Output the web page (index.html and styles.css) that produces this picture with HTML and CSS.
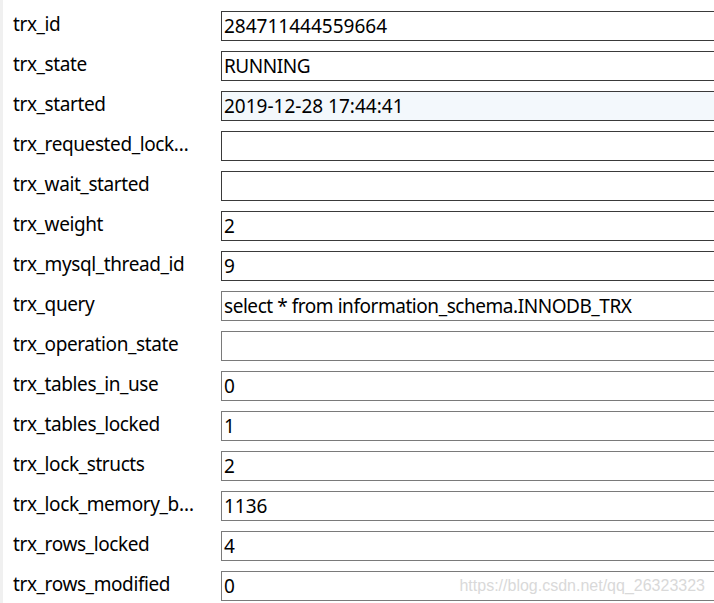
FILE: index.html
```html
<!DOCTYPE html>
<html lang="en">
<head>
  <meta charset="UTF-8">
  <title>INNODB_TRX</title>
  <link rel="stylesheet" href="styles.css">
</head>
<body>
  <div class="form">
    <div class="row"><label>trx_id</label><div class="field">284711444559664</div></div>
    <div class="row"><label>trx_state</label><div class="field text">RUNNING</div></div>
    <div class="row"><label>trx_started</label><div class="field active">2019-12-28 17:44:41</div></div>
    <div class="row"><label>trx_requested_lock…</label><div class="field"></div></div>
    <div class="row"><label>trx_wait_started</label><div class="field"></div></div>
    <div class="row"><label>trx_weight</label><div class="field">2</div></div>
    <div class="row"><label>trx_mysql_thread_id</label><div class="field">9</div></div>
    <div class="row light"><label>trx_query</label><div class="field text">select * from information_schema.INNODB_TRX</div></div>
    <div class="row light"><label>trx_operation_state</label><div class="field"></div></div>
    <div class="row light"><label>trx_tables_in_use</label><div class="field">0</div></div>
    <div class="row light"><label>trx_tables_locked</label><div class="field">1</div></div>
    <div class="row light"><label>trx_lock_structs</label><div class="field">2</div></div>
    <div class="row light"><label>trx_lock_memory_b…</label><div class="field">1136</div></div>
    <div class="row light"><label>trx_rows_locked</label><div class="field">4</div></div>
    <div class="row light"><label>trx_rows_modified</label><div class="field">0</div></div>
  </div>

  <div class="watermark">https://blog.csdn.net/qq_26323323</div>
</body>
</html>
```

FILE: styles.css
```css
*{
  margin:0;
  padding:0;
  box-sizing: border-box;
}
body {
  background: #fff;
  border-left: 3px solid #f0f0f0;
  font-family: 'Noto Sans', sans-serif;
  font-size: 19px;
  color: #000;
  height: 603px;
  overflow: hidden;
  position: relative;
}
.form{
  display: flex;
  flex-direction: column;
  gap: 10px;
  padding-top: 11px;
}
.row{
  display: flex;
  align-items: center;
  height: 30px;
}
label{
  width: 218px;
  padding-left: 10px;
  white-space: nowrap;
  line-height: 30px;
  letter-spacing: -0.4px;
  position: relative;
  top: -2px;
}
.field{
  flex: 1;
  margin-right: -20px;
  height: 30px;
  line-height: 28px;
  padding-left: 2px;
  border: 1px solid #3a3a3a;
  background: #fff;
  white-space: nowrap;
}
.field.text{
  letter-spacing: -0.45px;
}
.light .field{
  border-color: #7a7a7a;
}
.field.active{
  background: #f3f8fc;
}
.watermark{
  position: absolute;
  right: 9px;
  bottom: 8px;
  font-family: 'Liberation Sans', sans-serif;
  font-size: 16px;
  color: #d9d9d9;
}
```
